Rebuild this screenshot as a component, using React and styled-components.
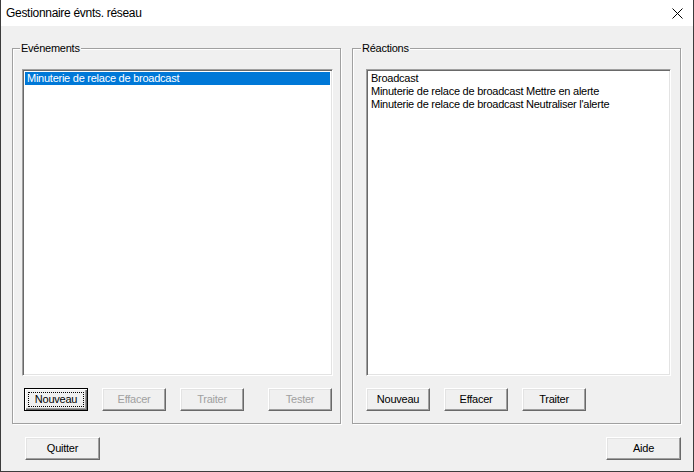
import React from 'react';
import styled, { createGlobalStyle, css } from 'styled-components';

const GlobalStyle = createGlobalStyle`
  html, body {
    margin: 0;
    padding: 0;
    background: #f0f0f0;
  }
  body {
    font-family: "Liberation Sans", Arial, sans-serif;
    font-size: 11px;
    letter-spacing: -0.25px;
    color: #000;
  }
`;

const Window = styled.div`
  width: 694px;
  height: 472px;
  box-sizing: border-box;
  border: 1px solid #3c3c3c;
  border-top: none;
  display: flex;
  flex-direction: column;
  background: #f0f0f0;
`;

const TitleBar = styled.div`
  height: 26px;
  flex: none;
  background: #fff;
  display: flex;
  align-items: center;
  justify-content: space-between;
  padding: 0 10px 0 5px;
  font-size: 12px;
  letter-spacing: -0.3px;
`;

const Client = styled.div`
  flex: 1;
  display: flex;
  flex-direction: column;
  padding: 22px 12px 0 11px;
`;

const GroupRow = styled.div`
  display: flex;
  gap: 11px;
`;

const GroupBox = styled.div`
  position: relative;
  width: 329px;
  height: 376px;
  box-sizing: border-box;
  border: 1px solid #a0a0a0;
  box-shadow: 1px 1px 0 #fff, inset 1px 1px 0 #fff;
  padding: 20px 0 0 ${p => p.$padLeft}px;
  display: flex;
  flex-direction: column;
`;

/* label sits over the top border line */
const GroupLabel = styled.span`
  position: absolute;
  top: -8px;
  left: ${p => p.$left}px;
  padding: 0 1px;
  background: #f0f0f0;
  line-height: 14px;
`;

const ListBox = styled.div`
  width: ${p => p.$width}px;
  height: 307px;
  box-sizing: border-box;
  background: #fff;
  border: 1px solid;
  border-color: #a0a0a0 #fff #fff #a0a0a0;
  box-shadow: inset 1px 1px 0 #696969, inset -1px -1px 0 #e3e3e3;
  padding: 2px;
`;

const ListItem = styled.div`
  height: 13px;
  line-height: 13px;
  padding-left: 2px;
  white-space: nowrap;
  ${p => p.$selected && css`
    background: #0078d7;
    color: #fff;
  `}
`;

const ButtonRow = styled.div`
  display: flex;
  margin-top: 12px;
  padding-left: ${p => p.$padLeft || 0}px;
`;

const Button = styled.button`
  width: ${p => p.$width || 64}px;
  height: 23px;
  margin-left: ${p => p.$ml || 0}px;
  box-sizing: border-box;
  padding: 0 0 2px;
  font-family: "Liberation Sans", Arial, sans-serif;
  font-size: 11px;
  letter-spacing: -0.25px;
  color: ${p => (p.disabled ? '#a0a0a0' : '#000')};
  background: #f0f0f0;
  border: 1px solid;
  border-color: #fff #696969 #696969 #fff;
  box-shadow: inset -1px -1px 0 #a0a0a0, inset 1px 1px 0 #e3e3e3;
  display: flex;
  align-items: center;
  justify-content: center;
  ${p => p.$default && css`
    padding: 0;
    border: 1px solid #000;
    box-shadow: inset 1px 1px 0 #fff, inset -1px -1px 0 #696969, inset -2px -2px 0 #a0a0a0;
  `}
`;

const FocusRect = styled.span`
  display: flex;
  align-items: center;
  justify-content: center;
  width: 56px;
  height: 15px;
  padding-bottom: 2px;
  box-sizing: border-box;
  border: 1px dotted #000;
`;

const BottomRow = styled.div`
  display: flex;
  justify-content: space-between;
  margin-top: 13px;
  padding: 0 0 0 13px;
`;

const CloseIcon = () => (
  <svg width="11" height="11" viewBox="0 0 11 11">
    <path d="M0.5 0.5 L10.5 10.5 M10.5 0.5 L0.5 10.5" stroke="#000" strokeWidth="1" />
  </svg>
);

const events = ['Minuterie de relace de broadcast'];
const reactions = [
  'Broadcast',
  'Minuterie de relace de broadcast Mettre en alerte',
  "Minuterie de relace de broadcast Neutraliser l'alerte",
];

export default function App() {
  return (
    <>
      <GlobalStyle />
      <Window>
        <TitleBar>
          <span>Gestionnaire évnts. réseau</span>
          <CloseIcon />
        </TitleBar>
        <Client>
          <GroupRow>
            <GroupBox $padLeft={9}>
              <GroupLabel $left={7}>Evénements</GroupLabel>
              <ListBox $width={311}>
                {events.map((e, i) => (
                  <ListItem key={e} $selected={i === 0}>{e}</ListItem>
                ))}
              </ListBox>
              <ButtonRow $padLeft={2}>
                <Button $default>
                  <FocusRect>Nouveau</FocusRect>
                </Button>
                <Button disabled $ml={14}>Effacer</Button>
                <Button disabled $ml={14}>Traiter</Button>
                <Button disabled $ml={24}>Tester</Button>
              </ButtonRow>
            </GroupBox>
            <GroupBox $padLeft={13}>
              <GroupLabel $left={8}>Réactions</GroupLabel>
              <ListBox $width={305}>
                {reactions.map(r => (
                  <ListItem key={r}>{r}</ListItem>
                ))}
              </ListBox>
              <ButtonRow>
                <Button>Nouveau</Button>
                <Button $ml={14}>Effacer</Button>
                <Button $ml={14}>Traiter</Button>
              </ButtonRow>
            </GroupBox>
          </GroupRow>
          <BottomRow>
            <Button $width={75}>Quitter</Button>
            <Button $width={75}>Aide</Button>
          </BottomRow>
        </Client>
      </Window>
    </>
  );
}
